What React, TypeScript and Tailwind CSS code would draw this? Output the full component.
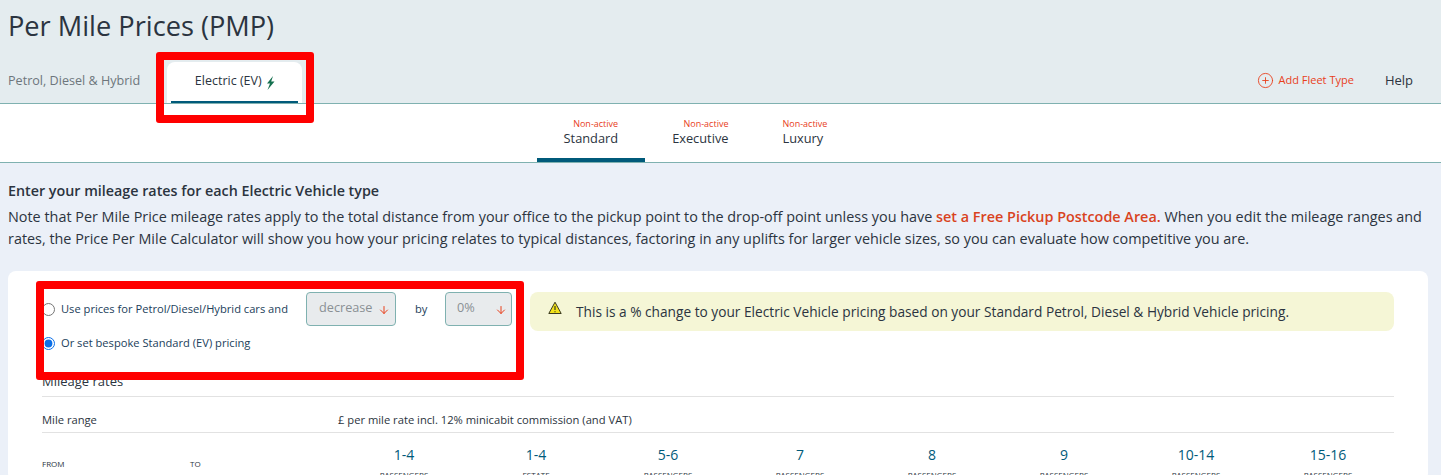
import { ArrowDown, CirclePlus } from "lucide-react";

const fleetTabs = [
  { name: "Standard", active: true },
  { name: "Executive", active: false },
  { name: "Luxury", active: false },
];

const columns = [
  { size: "1-4", label: "PASSENGERS" },
  { size: "1-4", label: "ESTATE" },
  { size: "5-6", label: "PASSENGERS" },
  { size: "7", label: "PASSENGERS" },
  { size: "8", label: "PASSENGERS" },
  { size: "9", label: "PASSENGERS" },
  { size: "10-14", label: "PASSENGERS" },
  { size: "15-16", label: "PASSENGERS" },
];

const SelectBox = ({ value, className }: { value: string; className: string }) => (
  <div
    className={`flex h-[34px] items-center justify-between rounded-[4px] border border-[#7fb1b0] bg-[#e8ebed] text-[12.7px] text-[#8a9094] ${className}`}
  >
    <span className="-mt-[2px]">{value}</span>
    <ArrowDown className="mt-[1px] h-3 w-3 text-[#e8401c]" strokeWidth={2} />
  </div>
);

export default function App() {
  return (
    <div className="relative h-[475px] overflow-hidden bg-[#ebf0f8] font-['Open_Sans',sans-serif] text-[#2b3440]">
      <header className="flex h-[104px] flex-col border-b border-[#7fb1b0] bg-[#e4ecef]">
        <h1 className="pl-2 pt-[6px] text-[27.2px] leading-[40px] text-[#2b3440]">Per Mile Prices (PMP)</h1>
        <div className="flex flex-1 items-end pl-2 pr-7">
          <span className="mb-[13px] text-[12.6px] leading-[18px] text-[#6d767c]">Petrol, Diesel &amp; Hybrid</span>
          <div className="ml-[27px] flex h-[41px] w-[135px] flex-col items-center rounded-t-lg bg-white">
            <div className="mt-[10px] flex items-center text-[12.5px] leading-[18px]">
              Electric (EV)
              <svg className="ml-1 mt-[4px] h-[14px] w-[9px]" viewBox="0 0 9 14">
                <path d="M7 0 1 7.5h3L1.5 14 8.5 5.5H5.2Z" fill="#14704f" />
              </svg>
            </div>
            <div className="mt-auto h-[2px] w-[127px] bg-[#005a7a]" />
          </div>
          <div className="mb-[14px] ml-auto flex items-center text-[11px] text-[#e8401c]">
            <CirclePlus className="mr-[5px] h-[17px] w-[17px]" strokeWidth={1.25} />
            Add Fleet Type
          </div>
          <span className="mb-[14px] ml-[31px] text-[13px] leading-[18px]">Help</span>
        </div>
      </header>

      <nav className="flex h-[59px] justify-center border-b border-[#7fb1b0] bg-white pr-[50px]">
        {fleetTabs.map((tab) => (
          <div
            key={tab.name}
            className={`flex flex-col items-center px-[27px] pt-[15px] ${tab.active ? "border-b-4 border-[#005a7a]" : ""}`}
          >
            <div>
              <div className="text-right text-[9px] leading-[10px] text-[#e8401c]">Non-active</div>
              <div className="text-[12.8px] leading-[19px]">{tab.name}</div>
            </div>
          </div>
        ))}
      </nav>

      <main className="px-2 pt-[18px]">
        <h2 className="text-[14.3px] font-semibold leading-[20px]">Enter your mileage rates for each Electric Vehicle type</h2>
        <p className="mt-[5px] w-[1420px] text-[14.4px] leading-[22px]">
          Note that Per Mile Price mileage rates apply to the total distance from your office to the pickup point to the
          drop-off point unless you have <span className="font-semibold text-[#d9431e]">set a Free Pickup Postcode Area.</span> When you edit the mileage ranges and rates, the Price Per Mile Calculator will show you how your pricing relates to typical distances, factoring in any uplifts for larger vehicle sizes, so you can evaluate how competitive you are.
        </p>

        <section className="mt-[21px] w-[1420px] rounded-lg bg-white pl-[34px] pr-[34px] pt-[21px]">
          <div className="flex">
            <div className="w-[488px]">
              <div className="flex items-center">
                <input type="radio" name="pricing" readOnly className="h-[13px] w-[13px]" />
                <span className="ml-[6px] w-[245px] text-[11.15px] font-medium text-[#21405a]">
                  Use prices for Petrol/Diesel/Hybrid cars and
                </span>
                <SelectBox value="decrease" className="w-[90px] pl-3 pr-[5px]" />
                <span className="ml-[19px] w-[29px] text-[11.15px] font-medium text-[#21405a]">by</span>
                <div className="ml-[1px]">
                  <SelectBox value="0%" className="w-[67px] pl-[11px] pr-[4px]" />
                </div>
              </div>
              <div className="mt-[9px] flex items-center">
                <input type="radio" name="pricing" defaultChecked className="h-[13px] w-[13px] accent-[#0b6fe8]" />
                <span className="ml-[6px] text-[11.15px] font-medium text-[#21405a]">Or set bespoke Standard (EV) pricing</span>
              </div>
            </div>
            <div className="flex h-[39px] w-[864px] items-center rounded-lg bg-[#f5f6d6] pl-[18px] pt-[2px] text-[13.7px]">
              <svg className="mb-[10px] mr-[14px] h-[14px] w-[14px] shrink-0" viewBox="0 0 14 14">
                <path d="M7 1.2 13.2 12.5H.8Z" fill="#f2e21b" stroke="#3b3b20" strokeWidth="1" strokeLinejoin="round" />
                <path d="M7 5v4M7 10.2v1" stroke="#3b3b20" strokeWidth="1.2" />
              </svg>
              This is a % change to your Electric Vehicle pricing based on your Standard Petrol, Diesel &amp; Hybrid Vehicle pricing.
            </div>
          </div>

          <h3 className="mt-[20px] text-[13px] leading-[18px]">Mileage rates</h3>
          <div className="mt-[6px] grid h-[37px] grid-cols-[296px_1fr] items-center border-y border-[#e2e2e2] pt-[12px] text-[11.2px]">
            <span>Mile range</span>
            <span>£ per mile rate incl. 12% minicabit commission (and VAT)</span>
          </div>
          <div className="grid grid-cols-[148px_148px_repeat(8,132px)] pt-[12px]">
            <span className="mt-[13px] text-[8px] font-medium">FROM</span>
            <span className="mt-[13px] text-[8px] font-medium">TO</span>
            {columns.map((col, i) => (
              <div key={i} className="flex flex-col items-center">
                <span className="text-[14px] font-medium leading-[20px] text-[#005a7a]">{col.size}</span>
                <span className="mt-[4px] text-[8px]">{col.label}</span>
              </div>
            ))}
          </div>
        </section>
      </main>

      {/* red annotations drawn on the screenshot */}
      <div className="absolute left-[156px] top-[52px] h-[71px] w-[158px] rounded-[3px] border-[8px] border-[#ff0000]" />
      <div className="absolute left-[36px] top-[281px] h-[99px] w-[488px] rounded-[3px] border-[8px] border-[#ff0000]" />
    </div>
  );
}
